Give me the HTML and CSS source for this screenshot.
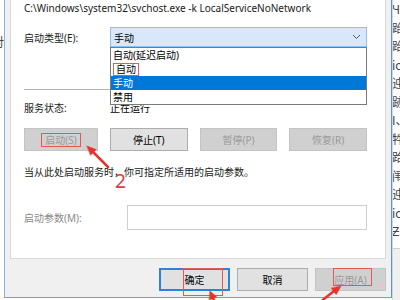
FILE: index.html
```html
<!DOCTYPE html>
<html lang="zh-CN">
<head>
    <meta charset="UTF-8">
    <meta name="viewport" content="width=device-width, initial-scale=1.0">
    <title>服务属性</title>
    <link rel="stylesheet" href="styles.css">
</head>
<body>

    <div class="screen">
        <div class="behind behind-left">
            <p>x<br>I<br>对</p>
            <p class="behind-end">/</p>
        </div>

        <div class="dialog">
            <div class="panel">
                <p class="path">C:\Windows\system32\svchost.exe -k LocalServiceNoNetwork</p>

                <div class="row row-type">
                    <span class="label">启动类型(E):</span>
                    <div class="combo">
                        <div class="combo-box">
                            <span>手动</span>
                            <svg class="chevron" width="9" height="6" viewBox="0 0 9 6">
                                <polyline points="1,1 4.5,4.5 8,1" fill="none" stroke="#555" stroke-width="1"/>
                            </svg>
                        </div>
                        <ul class="combo-list">
                            <li>自动(延迟启动)</li>
                            <li><span class="mark">自动</span></li>
                            <li class="selected">手动</li>
                            <li>禁用</li>
                        </ul>
                    </div>
                </div>

                <hr class="sep">

                <div class="row row-status">
                    <span class="label">服务状态:</span>
                    <span>正在运行</span>
                </div>

                <div class="btn-row">
                    <button class="btn" disabled><span class="mark">启动(S)</span></button>
                    <button class="btn">停止(T)</button>
                    <button class="btn" disabled>暂停(P)</button>
                    <button class="btn" disabled>恢复(R)</button>
                </div>

                <p class="desc">当从此处启动服务时，你可指定所适用的启动参数。</p>

                <div class="row row-param">
                    <span class="label muted">启动参数(M):</span>
                    <div class="input"></div>
                </div>
            </div>

            <div class="footer">
                <button class="btn btn-footer btn-default">确定</button>
                <button class="btn btn-footer">取消</button>
                <button class="btn btn-footer" disabled>应用(A)</button>
            </div>
        </div>

        <div class="behind behind-right">
            <p>Ч<br>跆<br>跆<br>ic<br>迚<br>跡<br>I、<br>牪<br>跲<br>闱<br>迚<br>ic<br>Ƶ</p>
            <div class="behind-foot"></div>
        </div>

        <!-- annotations drawn over the screenshot -->
        <span class="box box-ok"></span>
        <span class="box box-apply"></span>
        <span class="num num-1">1</span>
        <span class="num num-2">2</span>
        <svg class="arrows" width="400" height="300" viewBox="0 0 400 300">
            <g fill="#e8322c" stroke="#e8322c" stroke-linecap="round">
                <line x1="168" y1="80" x2="147" y2="71" stroke-width="2.5"/>
                <polygon points="140,68 149.9,67.8 146.7,75.2" stroke-width="0.5"/>

                <line x1="108" y1="167" x2="93" y2="152" stroke-width="2.5"/>
                <polygon points="87,146 96.2,149.6 90.6,155.2" stroke-width="0.5"/>

                <line x1="213" y1="298" x2="215" y2="303" stroke-width="2.5"/>
                <polygon points="210,291 216.7,296.9 209.3,299.9" stroke-width="0.5"/>

                <line x1="334" y1="291" x2="319" y2="303" stroke-width="2.5"/>
                <polygon points="341,286 336.2,294.7 331.4,288.3" stroke-width="0.5"/>
            </g>
        </svg>
    </div>

</body>
</html>
```

FILE: styles.css
```css
* {
    margin: 0;
    padding: 0;
    box-sizing: border-box;
}

body {
    background-color: #fff;
    font-family: "Noto Sans", "Noto Sans CJK SC", sans-serif;
    font-size: 10px;
    color: #000;
    overflow: hidden;
}

.screen {
    position: relative;
    display: flex;
    width: 400px;
    height: 300px;
    overflow: hidden;
}

/* windows peeking out on both sides */
.behind {
    display: flex;
    flex-direction: column;
    overflow: hidden;
    background-color: #fff;
    height: 300px;
    font-family: "Noto Sans CJK SC", sans-serif;
    font-size: 12px;
    line-height: 15px;
    color: #444;
}

.behind-left {
    width: 4px;
}

.behind-left p {
    margin-left: -8px;
    padding-top: 4px;
}

.behind-left .behind-end {
    margin-top: auto;
    margin-left: -6px;
    padding-bottom: 22px;
}

.behind-right {
    width: 8px;
    border-left: 1px solid #cfd9e4;
    line-height: 18.5px;
}

.behind-right p {
    margin-left: -1px;
}

.behind-foot {
    margin-top: auto;
    height: 52px;
    background-color: #f0f0f0;
    border-top: 1px solid #d0d0d0;
}

.dialog {
    width: 389px;
    height: 298px;
    background-color: #f0f0f0;
    border-left: 1px solid #8fb0d8;
    border-right: 1px solid #5b94d4;
    border-bottom: 1px solid #6f9fd8;
    padding: 0 5px;
}

.panel {
    height: 259px;
    background-color: #fff;
    border: 1px solid #d9d9d9;
    border-top: none;
    padding: 0 18px 0 13px;
}

.path {
    line-height: 16px;
    color: #1a1a1a;
}

.row {
    display: flex;
    align-items: center;
}

.label {
    flex: none;
    color: #1a1a1a;
}

.muted {
    color: #8a8a8a;
}

.row-type {
    margin-top: 11px;
    height: 20px;
}

.row-type .label {
    width: 86px;
}

.combo {
    position: relative;
    flex: 1;
    height: 20px;
}

.combo-box {
    display: flex;
    align-items: center;
    justify-content: space-between;
    height: 20px;
    padding: 0 5px 0 3px;
    background-color: #d6e8f9;
    border: 1px solid #8fbfea;
}

.chevron {
    display: block;
}

.combo-list {
    position: absolute;
    top: 20px;
    left: 0;
    right: 0;
    list-style-type: none;
    background-color: #fff;
    border: 1px solid #7a7a7a;
    z-index: 2;
}

.combo-list li {
    height: 14px;
    line-height: 14px;
    padding-left: 2px;
}

.combo-list li.selected {
    background-color: #0078d7;
    color: #fff;
}

.mark {
    display: inline-block;
    border: 1px solid #e05a5a;
    padding: 0 2px;
    line-height: 11px;
}

.sep {
    border: none;
    height: 1px;
    background-color: #b4b4b4;
    margin-top: 42px;
}

.row-status {
    margin-top: 10px;
    line-height: 16px;
}

.row-status .label {
    width: 86px;
}

.btn-row {
    display: grid;
    grid-template-columns: 74px 1fr 1fr 1fr;
    column-gap: 12px;
    margin-top: 12px;
}

.btn {
    height: 23px;
    font-family: inherit;
    font-size: 10px;
    color: #000;
    background-color: #e1e1e1;
    border: 1px solid #adadad;
}

.btn:disabled {
    background-color: #d0d0d0;
    border-color: #c4c4c4;
    color: #9a9a9a;
}

.btn-row .mark {
    line-height: 12px;
    padding: 0 3px;
}

.desc {
    margin-top: 13px;
    line-height: 16px;
    color: #1a1a1a;
}

.row-param {
    margin-top: 25px;
}

.row-param .label {
    width: 103px;
}

.input {
    flex: 1;
    height: 25px;
    border: 1px solid #cfcfcf;
    background-color: #fff;
}

.footer {
    display: flex;
    justify-content: flex-end;
    gap: 7px;
    padding-top: 9px;
}

.btn-footer {
    width: 71px;
}

.btn-default {
    border: 2px solid #2a84d8;
}

/* annotations */
.box {
    position: absolute;
    border: 1px solid #e05a5a;
    pointer-events: none;
}

.box-ok {
    left: 183px;
    top: 268px;
    width: 40px;
    height: 28px;
}

.box-apply {
    left: 333px;
    top: 268px;
    width: 39px;
    height: 18px;
}

.num {
    position: absolute;
    font-family: "Noto Sans", sans-serif;
    font-size: 19px;
    line-height: 19px;
    color: #e2383a;
}

.num-1 {
    left: 175px;
    top: 87px;
}

.num-2 {
    left: 115px;
    top: 172px;
}

.arrows {
    position: absolute;
    left: 0;
    top: 0;
    pointer-events: none;
}
```
